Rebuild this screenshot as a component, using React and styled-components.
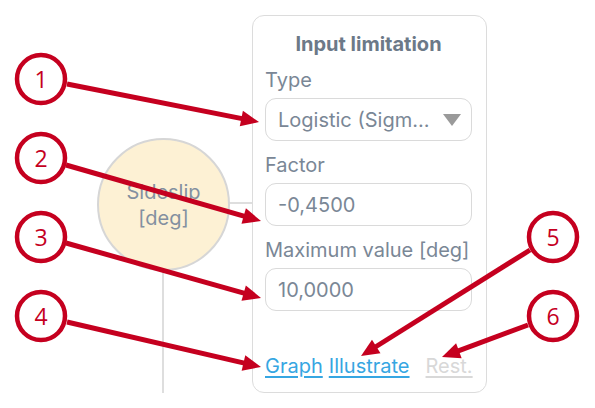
import React from 'react';
import styled, { createGlobalStyle } from 'styled-components';

const GlobalStyle = createGlobalStyle`
  html, body {
    margin: 0;
    padding: 0;
    background: #ffffff;
  }
  body {
    font-family: Inter, "Noto Sans", "Liberation Sans", sans-serif;
  }
`;

const RED = '#c5001f';

const Page = styled.div`
  position: relative;
  width: 595px;
  height: 408px;
  overflow: hidden;
  display: flex;
  padding-top: 15px;
  box-sizing: border-box;
`;

const Canvas = styled.div`
  position: relative;
  width: 252px;
  flex: none;
`;

const Node = styled.div`
  position: absolute;
  left: 97px;
  top: 123px;
  width: 129px;
  height: 129px;
  border-radius: 50%;
  background: #fdf1d4;
  border: 2px solid #d6d6d6;
  display: flex;
  flex-direction: column;
  align-items: center;
  justify-content: center;
  color: #8390a0;
  font-size: 20px;
  line-height: 26px;
`;

const Wire = styled.div`
  position: absolute;
  background: #dedede;
`;

const Panel = styled.div`
  width: 235px;
  height: 378px;
  box-sizing: border-box;
  border: 1px solid #dcdcdc;
  border-radius: 12px;
  padding: 16px 14px 0 12px;
  display: flex;
  flex-direction: column;
  background: #fff;
  color: #7a8796;
`;

const Title = styled.div`
  font-size: 20px;
  font-weight: 700;
  line-height: 24px;
  text-align: center;
  color: #6c7988;
`;

const Label = styled.div`
  font-size: 20px;
  line-height: 24px;
  margin-top: 12px;
  margin-bottom: 6px;
`;

const Field = styled.div`
  height: 43px;
  box-sizing: border-box;
  border: 1px solid #dadada;
  border-radius: 11px;
  padding: 0 12px;
  display: flex;
  align-items: center;
  justify-content: space-between;
  font-size: 20px;
  color: #7a8796;
  white-space: nowrap;
`;

const Caret = styled.span`
  flex: none;
  width: 0;
  height: 0;
  border-left: 9px solid transparent;
  border-right: 9px solid transparent;
  border-top: 12px solid #9a9a9a;
  margin-right: -2px;
`;

const Links = styled.div`
  display: flex;
  align-items: center;
  gap: 6px;
  margin-top: 43px;
  font-size: 20px;
  line-height: 24px;
`;

const Link = styled.a`
  color: ${({ $disabled }) => ($disabled ? '#d8d8d8' : '#36a6e2')};
  text-decoration: underline;
  text-decoration-thickness: 1.5px;
  text-underline-offset: 3px;
  margin-left: ${({ $push }) => ($push ? 10 : 0)}px;
  cursor: pointer;
`;

const Overlay = styled.svg`
  position: absolute;
  left: 0;
  top: 0;
  pointer-events: none;
`;

const badges = [
  { n: 1, x: 41, y: 79 },
  { n: 2, x: 41, y: 158 },
  { n: 3, x: 41, y: 237 },
  { n: 4, x: 41, y: 316 },
  { n: 5, x: 553, y: 237 },
  { n: 6, x: 553, y: 316 },
];

const arrows = [
  { x1: 67, y1: 84, x2: 259, y2: 122 },
  { x1: 66, y1: 165, x2: 261, y2: 221 },
  { x1: 66, y1: 243, x2: 261, y2: 298 },
  { x1: 67, y1: 322, x2: 261, y2: 367 },
  { x1: 530, y1: 250, x2: 361, y2: 356 },
  { x1: 528, y1: 325, x2: 442, y2: 357 },
];

function Arrow({ x1, y1, x2, y2 }) {
  const dx = x2 - x1;
  const dy = y2 - y1;
  const len = Math.hypot(dx, dy);
  const ux = dx / len;
  const uy = dy / len;
  const head = 18;
  const half = 8;
  const bx = x2 - ux * head;
  const by = y2 - uy * head;
  const pts = [
    [x2, y2],
    [bx - uy * half, by + ux * half],
    [bx + uy * half, by - ux * half],
  ]
    .map((p) => p.join(','))
    .join(' ');
  return (
    <g>
      <line x1={x1} y1={y1} x2={bx + ux * 2} y2={by + uy * 2} stroke={RED} strokeWidth="5" />
      <polygon points={pts} fill={RED} />
    </g>
  );
}

export default function App() {
  return (
    <>
      <GlobalStyle />
      <Page>
        <Canvas>
          <Wire style={{ left: 162, top: 254, width: 2, height: 124 }} />
          <Wire style={{ left: 226, top: 187, width: 26, height: 2 }} />
          <Node>
            <span>Sideslip</span>
            <span>[deg]</span>
          </Node>
        </Canvas>
        <Panel>
          <Title>Input limitation</Title>
          <Label>Type</Label>
          <Field>
            <span>Logistic (Sigm...</span>
            <Caret />
          </Field>
          <Label>Factor</Label>
          <Field>-0,4500</Field>
          <Label>Maximum value [deg]</Label>
          <Field>10,0000</Field>
          <Links>
            <Link>Graph</Link>
            <Link>Illustrate</Link>
            <Link $disabled $push>Rest.</Link>
          </Links>
        </Panel>
        <Overlay width="595" height="408" viewBox="0 0 595 408">
          {arrows.map((a, i) => (
            <Arrow key={i} {...a} />
          ))}
          {badges.map((b) => (
            <g key={b.n}>
              <circle cx={b.x} cy={b.y} r="24" fill="#fff" stroke={RED} strokeWidth="4.5" />
              <text
                x={b.x}
                y={b.y + 8.5}
                textAnchor="middle"
                fontFamily="'Open Sans', 'DejaVu Sans', sans-serif"
                fontSize="23"
                fill={RED}
              >
                {b.n}
              </text>
            </g>
          ))}
        </Overlay>
      </Page>
    </>
  );
}
